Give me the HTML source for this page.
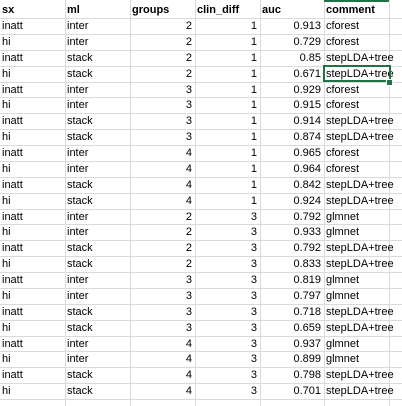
<!DOCTYPE html>
<html><head><style>
body{margin:0;width:402px;height:406px;overflow:hidden;background:#fff;position:relative;font-family:"Liberation Sans",sans-serif;font-size:11px;color:#000}
.g{position:absolute;background:#dadada}
.r{position:absolute;left:0;width:402px;height:16px}
.r span{position:absolute;top:1px;line-height:15px;white-space:nowrap}
.h span{font-weight:bold}
</style></head><body>
<div id="c"></div>
<div style="position:absolute;left:324px;top:0;width:65px;height:2px;background:#217346"></div>
<div style="position:absolute;left:323px;top:65px;width:64px;height:13px;border:2px solid #217346"></div>
<div style="position:absolute;left:386px;top:79px;width:5px;height:5px;background:#217346;border:1px solid #fff"></div>
<script>
(function(){
var d=[["sx","ml","groups","clin_diff","auc","comment"],
["inatt","inter",2,1,"0.913","cforest"],["hi","inter",2,1,"0.729","cforest"],["inatt","stack",2,1,"0.85","stepLDA+tree"],["hi","stack",2,1,"0.671","stepLDA+tree"],
["inatt","inter",3,1,"0.929","cforest"],["hi","inter",3,1,"0.915","cforest"],["inatt","stack",3,1,"0.914","stepLDA+tree"],["hi","stack",3,1,"0.874","stepLDA+tree"],
["inatt","inter",4,1,"0.965","cforest"],["hi","inter",4,1,"0.964","cforest"],["inatt","stack",4,1,"0.842","stepLDA+tree"],["hi","stack",4,1,"0.924","stepLDA+tree"],
["inatt","inter",2,3,"0.792","glmnet"],["hi","inter",2,3,"0.933","glmnet"],["inatt","stack",2,3,"0.792","stepLDA+tree"],["hi","stack",2,3,"0.833","stepLDA+tree"],
["inatt","inter",3,3,"0.819","glmnet"],["hi","inter",3,3,"0.797","glmnet"],["inatt","stack",3,3,"0.718","stepLDA+tree"],["hi","stack",3,3,"0.659","stepLDA+tree"],
["inatt","inter",4,3,"0.937","glmnet"],["hi","inter",4,3,"0.899","glmnet"],["inatt","stack",4,3,"0.798","stepLDA+tree"],["hi","stack",4,3,"0.701","stepLDA+tree"]];
var xs=[0,65,130,195,260,324,389],h="";
for(var i=0;i<xs.length;i++)if(xs[i])h+='<div class="g" style="left:'+xs[i]+'px;top:0;width:1px;height:406px"></div>';
for(var k=0;k<=24;k++)h+='<div class="g" style="left:0;top:'+Math.round(18+k*15.875)+'px;width:402px;height:1px"></div>';
for(var r=0;r<d.length;r++){var ty=r==0?2:Math.round(18+(r-1)*15.875);h+='<div class="r'+(r==0?' h':'')+'" style="top:'+ty+'px">';
for(var c=0;c<6;c++){var v=d[r][c];var right=(r>0&&c>=2&&c<=4);
h+= right?'<span style="right:'+(402-xs[c+1]+3)+'px">'+v+'</span>':'<span style="left:'+(xs[c]+2)+'px">'+v+'</span>';}
h+='</div>';}
document.getElementById("c").innerHTML=h;
})();
</script>
</body></html>
